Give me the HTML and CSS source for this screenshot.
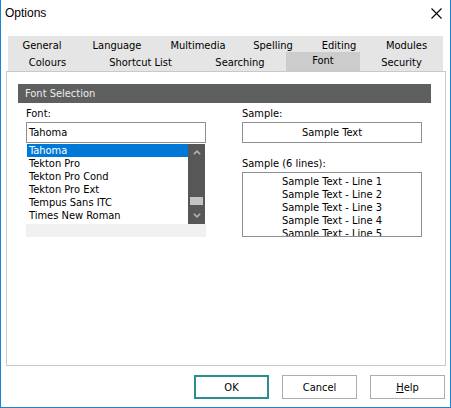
FILE: index.html
```html
<!DOCTYPE html>
<html>
<head>
<meta charset="utf-8">
<title>Options</title>
<link rel="stylesheet" href="styles.css">
</head>
<body>
<div class="window">
  <div class="titlebar">
    <span class="title">Options</span>
    <svg class="close" width="11" height="11" viewBox="0 0 11 11"><path d="M0.5 0.5 L10.5 10.5 M10.5 0.5 L0.5 10.5" stroke="#000" stroke-width="1.1" fill="none"/></svg>
  </div>
  <div class="tabs">
    <div class="tabrow row1">
      <div class="tab t-general">General</div>
      <div class="tab t-language">Language</div>
      <div class="tab t-multimedia">Multimedia</div>
      <div class="tab t-spelling">Spelling</div>
      <div class="tab t-editing">Editing</div>
      <div class="tab t-modules">Modules</div>
    </div>
    <div class="tabrow row2">
      <div class="tab t-colours">Colours</div>
      <div class="tab t-shortcut">Shortcut List</div>
      <div class="tab t-searching">Searching</div>
      <div class="tab t-font active">Font</div>
      <div class="tab t-security">Security</div>
    </div>
  </div>
  <div class="panel">
    <div class="group-header">Font Selection</div>
    <div class="cols">
      <div class="col">
        <div class="label">Font:</div>
        <div class="field">Tahoma</div>
        <div class="listbox">
          <div class="items">
            <div class="item selected">Tahoma</div>
            <div class="item">Tekton Pro</div>
            <div class="item">Tekton Pro Cond</div>
            <div class="item">Tekton Pro Ext</div>
            <div class="item">Tempus Sans ITC</div>
            <div class="item">Times New Roman</div>
          </div>
          <div class="vscroll">
            <div class="sbtn"><svg width="8" height="5" viewBox="0 0 8 5"><polyline points="0.8,4.3 4,1.2 7.2,4.3" fill="none" stroke="#b4b4b4" stroke-width="1.6"/></svg></div>
            <div class="track"><div class="thumb"></div></div>
            <div class="sbtn"><svg width="8" height="5" viewBox="0 0 8 5"><polyline points="0.8,0.7 4,3.8 7.2,0.7" fill="none" stroke="#b4b4b4" stroke-width="1.6"/></svg></div>
          </div>
        </div>
        <div class="hstrip"></div>
      </div>
      <div class="col">
        <div class="label">Sample:</div>
        <div class="field center">Sample Text</div>
        <div class="label label2">Sample (6 lines):</div>
        <div class="multibox">
          <div>Sample Text - Line 1</div>
          <div>Sample Text - Line 2</div>
          <div>Sample Text - Line 3</div>
          <div>Sample Text - Line 4</div>
          <div>Sample Text - Line 5</div>
        </div>
      </div>
    </div>
  </div>
  <div class="buttons">
    <div class="btn default">OK</div>
    <div class="btn">Cancel</div>
    <div class="btn"><u>H</u>elp</div>
  </div>
</div>
</body>
</html>
```
FILE: styles.css
```css
* { box-sizing: border-box; }
html, body { margin: 0; padding: 0; background: #fff; }
body {
  font-family: "DejaVu Sans Condensed", "Liberation Sans", sans-serif;
  font-size: 11px;
  color: #000;
}
.window {
  width: 451px;
  height: 408px;
  background: #fff;
  border: 1px solid #1883d7;
  border-top: none;
  display: flex;
  flex-direction: column;
}
.titlebar {
  height: 36px;
  display: flex;
  justify-content: space-between;
  align-items: flex-start;
  padding: 5px 8px 0 4px;
}
.title {
  font-family: "Liberation Sans", sans-serif;
  font-size: 12px;
  line-height: 16px;
}
.close { margin-top: 3px; }
.tabs {
  width: 435px;
  margin-left: 7px;
  background: #e5e5e5;
  height: 35px;
}
.tabrow { display: flex; align-items: flex-end; }
.row1 { height: 18px; }
.row2 { height: 17px; }
.tab { text-align: center; height: 18px; line-height: 17px; padding-top: 1px; white-space: nowrap; }
.row2 .tab { line-height: 16px; height: 17px; }
.row2 .tab.active { background: #cccccc; height: 19px; margin-top: -2px; }
.t-general { width: 68px; }
.t-language { width: 82px; }
.t-multimedia { width: 80px; }
.t-spelling { width: 70px; }
.t-editing { width: 62px; }
.t-modules { width: 73px; }
.t-colours { width: 79px; }
.t-shortcut { width: 107px; }
.t-searching { width: 92px; }
.t-font { width: 74px; }
.t-security { width: 83px; }
.panel {
  margin-left: 5px;
  width: 440px;
  height: 295px;
  border: 1px solid #c9c9c9;
  padding: 12px 13px 0 11px;
}
.group-header {
  width: 413px;
  height: 19px;
  line-height: 18px;
  padding-top: 1px;
  background: #5e5f5f;
  color: #ececec;
  padding-left: 7px;
}
.cols {
  display: flex;
  gap: 36px;
  padding-left: 8px;
}
.col { width: 180px; display: flex; flex-direction: column; }
.label { line-height: 13px; height: 13px; margin-top: 4px; margin-bottom: 2px; }
.label2 { margin-top: 14px; }
.field {
  height: 21px;
  border: 1px solid #8f8f8f;
  line-height: 19px;
  padding-left: 2px;
}
.field.center { text-align: center; padding-left: 0; }
.listbox {
  height: 81px;
  padding: 1px 1px 0 1px;
  display: flex;
  background: #fff;
}
.items { flex: 1; }
.item { height: 13px; line-height: 12px; padding: 1px 0 0 2px; white-space: nowrap; }
.item.selected { background: #0078d7; color: #fff; }
.vscroll {
  width: 17px;
  height: 80px;
  background: #575757;
  display: flex;
  flex-direction: column;
}
.sbtn { height: 17px; display: flex; align-items: center; justify-content: center; }
.track { flex: 1; }
.thumb { margin: 36px 2px 0 2px; height: 8px; background: #c3c3c3; }
.hstrip { height: 13px; background: #f0f0f0; }
.multibox {
  height: 65px;
  border: 1px solid #8f8f8f;
  overflow: hidden;
  text-align: center;
  line-height: 13px;
  padding-top: 2px;
}
.buttons {
  display: flex;
  justify-content: flex-end;
  gap: 13px;
  margin-top: 9px;
  padding-right: 5px;
}
.btn {
  width: 75px;
  height: 24px;
  border: 1px solid #adadad;
  background: #fff;
  display: flex;
  align-items: center;
  justify-content: center;
}
.btn.default { border: 2px solid #2b8f8f; }
```
